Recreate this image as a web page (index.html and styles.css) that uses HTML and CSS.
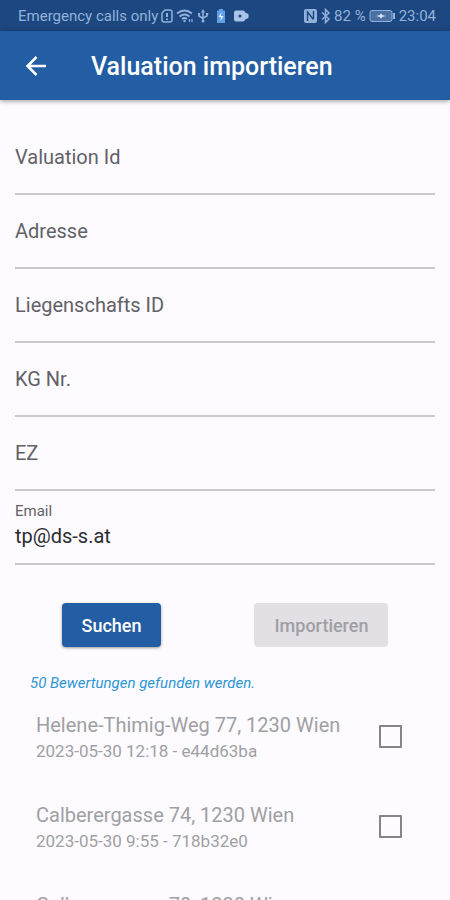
FILE: index.html
```html
<!DOCTYPE html>
<html lang="de">
<head>
<meta charset="utf-8">
<meta name="viewport" content="width=device-width, initial-scale=1">
<title>Valuation importieren</title>
<link rel="stylesheet" href="styles.css">
</head>
<body>
<div class="app">
  <div class="status">
    <div class="status-group">
      <span>Emergency calls only</span>
      <svg width="12" height="16" viewBox="0 0 12 16" fill="none" stroke="currentColor" stroke-width="1.500"><path d="M4 2h5a2 2 0 0 1 2 2v8a2 2 0 0 1-2 2H3a2 2 0 0 1-2-2V5z"/><path d="M6 5v4M6 10.500v1.500" stroke-width="2"/></svg>
      <svg class="wifi" width="18" height="16" viewBox="0 0 18 16" fill="none" stroke="currentColor" stroke-width="1.800"><path d="M1 5.500q7.500-6 15 0M3.500 8.500q5-4 10 0M6 11q2.500-2 5 0"/><circle cx="8.500" cy="13" r="1.200" fill="currentColor" stroke="none"/><path d="M13.500 11v3M16 11v3" stroke-width="1.200"/></svg>
      <svg class="usb" width="12" height="16" viewBox="0 0 12 16" fill="none" stroke="currentColor" stroke-width="1.500"><path d="M6 4v9M2 6v2l4 2.500M10 6v2l-4 2"/><path d="M6 1l2 3.500H4zM1 5h2.200v2.200H1zM9 5h2.200v2.200H9z" fill="currentColor" stroke="none"/><circle cx="6" cy="13" r="1.500" fill="currentColor" stroke="none"/></svg>
      <svg class="cell" width="10" height="16" viewBox="0 0 10 16"><path d="M3 1h4v1.500h2V15H1V2.500h2z" fill="#5f9fe6"/><path d="M5.500 4L2.500 9H5l-.5 4 3-5H5z" fill="#eaf3ff"/></svg>
      <svg class="cam" width="17" height="16" viewBox="0 0 17 16"><path fill="#a9c4e6" fill-rule="evenodd" d="M3 2.500h7a2 2 0 0 1 2 2l3.500 1.500v4L12 11.500a2 2 0 0 1-2 2H3a2 2 0 0 1-2-2v-7a2 2 0 0 1 2-2zM7 6.500a1.500 1.500 0 1 0 0 3 1.500 1.500 0 0 0 0-3z"/></svg>
    </div>
    <div class="status-group">
      <svg width="15" height="16" viewBox="0 0 15 16"><rect x="1" y="1" width="13" height="14" rx="2" fill="currentColor"/><path d="M4.500 13V4l6 7.500M10.500 3v7.500" fill="none" stroke="#1c4780" stroke-width="1.400"/></svg>
      <svg class="bt" width="10" height="16" viewBox="0 0 10 16" fill="none" stroke="currentColor" stroke-width="1.500"><path d="M1 4.500l7 6.500-3.500 3.500V1.500L8 5l-7 6.500"/></svg>
      <span>82 %</span>
      <svg class="battery" width="27" height="16" viewBox="0 0 27 16"><rect x="1" y="2.500" width="22" height="11" rx="2" fill="currentColor" fill-opacity=".4" stroke="currentColor"/><path d="M25 5v6" stroke="currentColor" stroke-width="2"/><path d="M7 8l4-1 1-2 1 2 4 1-4 1-1 2-1-2z" fill="#dce9fa"/></svg>
      <span>23:04</span>
    </div>
  </div>

  <header class="bar">
    <button class="back" type="button" aria-label="Zurück">
      <svg width="24" height="24" viewBox="0 0 24 24" fill="none" stroke="currentColor" stroke-width="2.500"><path d="M22 12H4M12.500 3L3.500 12l9 9"/></svg>
    </button>
    <h1>Valuation importieren</h1>
  </header>

  <main>
    <form class="form">
      <div class="field"><label for="vid">Valuation Id</label><input id="vid" type="text"></div>
      <div class="field"><label for="adr">Adresse</label><input id="adr" type="text"></div>
      <div class="field"><label for="lid">Liegenschafts ID</label><input id="lid" type="text"></div>
      <div class="field"><label for="kg">KG Nr.</label><input id="kg" type="text"></div>
      <div class="field"><label for="ez">EZ</label><input id="ez" type="text"></div>
      <div class="field filled"><label for="mail">Email</label><input id="mail" type="email" value="tp@ds-s.at"></div>
      <div class="actions">
        <button class="btn primary" type="button">Suchen</button>
        <button class="btn" type="button" disabled>Importieren</button>
      </div>
    </form>

    <p class="count">50 Bewertungen gefunden werden.</p>
    <ul class="results">
      <li><label for="r1"><span class="title">Helene-Thimig-Weg 77, 1230 Wien</span><span class="meta">2023-05-30 12:18 - e44d63ba</span></label><input id="r1" type="checkbox"></li>
      <li><label for="r2"><span class="title">Calberergasse 74, 1230 Wien</span><span class="meta">2023-05-30 9:55 - 718b32e0</span></label><input id="r2" type="checkbox"></li>
      <li><label for="r3"><span class="title">Calberergasse 70, 1230 Wien</span></label><input id="r3" type="checkbox"></li>
    </ul>
  </main>
</div>
</body>
</html>
```
FILE: styles.css
```css
* {
  box-sizing: border-box;
}

body {
  margin: 0;
  background: #fdfbff;
  font-family: Roboto, "Liberation Sans", sans-serif;
  font-size: 20px;
  color: #2c2c30;
}

.app {
  display: flex;
  flex-direction: column;
  height: 100vh;
}

.status {
  display: flex;
  flex: none;
  justify-content: space-between;
  align-items: center;
  height: 31px;
  padding: 0 14px 0 18px;
  background: #1c4780;
  color: #92b2dc;
  font-size: 15px;
  white-space: nowrap;
}

.status-group {
  display: flex;
  align-items: center;
  gap: 3px;
}

.status svg {
  flex: none;
}

.cell,
.cam {
  margin-left: 4px;
}

.bar {
  position: relative;
  display: flex;
  flex: none;
  align-items: center;
  gap: 39px;
  height: 69px;
  padding: 2px 20px 0;
  background: #235da3;
  box-shadow: 0 1px 5px rgba(0, 0, 0, 0.4);
  color: #fff;
}

.back {
  display: grid;
  place-items: center;
  width: 32px;
  height: 40px;
  padding: 0 0 2px;
  border: 0;
  background: none;
  color: inherit;
}

h1 {
  margin: 0;
  font-size: 25px;
  font-weight: 500;
}

main {
  flex: 1;
  min-height: 0;
  overflow-y: auto;
  scrollbar-width: none;
}

.form {
  padding: 21px 15px 0;
}

.field {
  display: grid;
  height: 74px;
  border-bottom: 2px solid #cac8cc;
}

.field label,
.field input {
  grid-area: 1 / 1;
}

.field label {
  padding-top: 24px;
  line-height: 24px;
  color: #626166;
}

.field input {
  min-width: 0;
  padding: 0;
  border: 0;
  outline: 0;
  background: none;
  font: inherit;
  color: inherit;
}

.field.filled label {
  padding-top: 8px;
  font-size: 15px;
}

.field.filled input {
  padding-top: 18px;
}

.actions {
  display: flex;
  justify-content: space-around;
  padding-top: 38px;
}

.btn {
  height: 44px;
  padding: 0 20px;
  border: 0;
  border-radius: 4px;
  background: #e2e0e5;
  color: #a09fa4;
  font: 500 18px Roboto, "Liberation Sans", sans-serif;
}

.primary {
  background: #235da3;
  box-shadow: 0 1px 3px rgba(0, 0, 0, 0.4);
  color: #fff;
}

.count {
  margin: 0;
  padding: 26px 30px 0;
  font-size: 15px;
  font-style: italic;
  line-height: 20px;
  color: #2d96d3;
}

.results {
  margin: 0;
  padding: 19px 48px 0 36px;
  list-style: none;
}

.results li {
  display: flex;
  justify-content: space-between;
  align-items: flex-start;
  height: 90px;
}

.results label {
  display: grid;
  color: #a09fa3;
}

.title {
  line-height: 26px;
}

.meta {
  font-size: 17px;
  line-height: 26px;
}

.results input {
  appearance: none;
  width: 23px;
  height: 23px;
  margin: 13px 0 0;
  border: 2px solid #858488;
  border-radius: 1px;
}
```
